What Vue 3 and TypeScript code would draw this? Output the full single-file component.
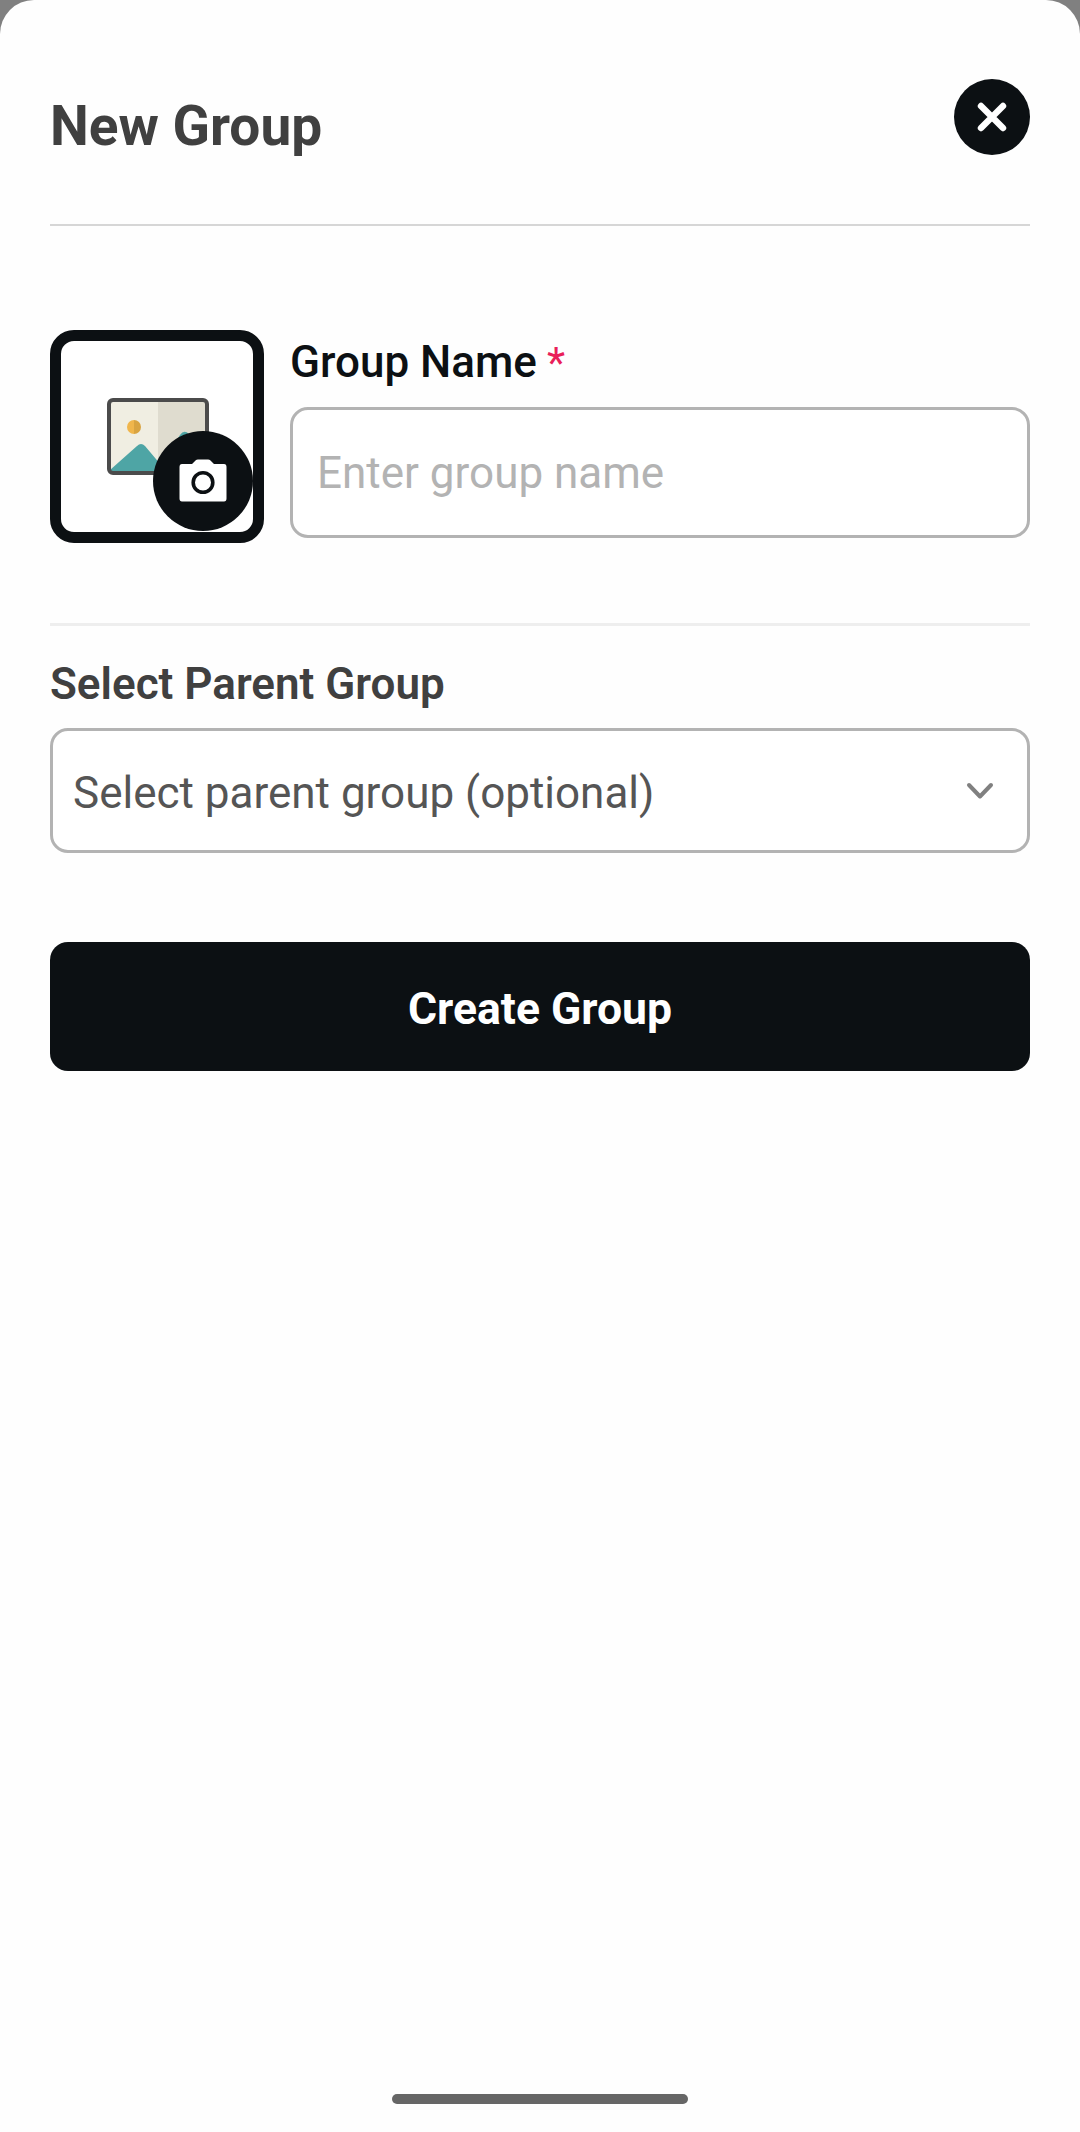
<script setup lang="ts">
const title: string = 'New Group'
</script>

<template>
  <div class="sheet">
    <header class="head">
      <h1 class="title">{{ title }}</h1>
      <button class="close" type="button" aria-label="Close">
        <svg width="32" height="32" viewBox="0 0 32 32">
          <path d="M5 5 L27 27 M27 5 L5 27" fill="none" stroke="#fff" stroke-width="6.4" stroke-linecap="round" />
        </svg>
      </button>
    </header>
    <div class="rule"></div>

    <section class="name-row">
      <div class="avatar">
        <svg class="pic" width="102" height="77" viewBox="0 0 102 77">
          <rect x="2" y="2" width="98" height="73" rx="4" fill="#f0eee2" />
          <path d="M51 2 H96 a4 4 0 0 1 4 4 V71 a4 4 0 0 1 -4 4 H51 Z" fill="#dfdccf" />
          <path d="M3 72 L30 48 Q34 44 38 48 L54 67 L73 37 Q77 31 82 36 L100 58 V71 a4 4 0 0 1 -4 4 H6 Z" fill="#4ea5a5" />
          <path d="M27 22 a7 7 0 0 0 0 14 Z" fill="#f0b64c" />
          <path d="M27 22 a7 7 0 0 1 0 14 Z" fill="#d9a441" />
          <rect x="2" y="2" width="98" height="73" rx="4" fill="none" stroke="#4b4b4b" stroke-width="4" />
        </svg>
        <span class="cam">
          <svg width="48" height="44" viewBox="0 0 48 44">
            <path d="M3 5 H13 L16.5 1.5 Q17.5 .5 19 .5 H29 Q30.5 .5 31.5 1.5 L35 5 H45 Q47.5 5 47.5 8 V39.5 Q47.5 42.5 45 42.5 H3 Q.5 42.5 .5 39.5 V8 Q.5 5 3 5 Z" fill="#fff" />
            <circle cx="24" cy="23.5" r="9.8" fill="#fff" stroke="#0c1013" stroke-width="3.6" />
          </svg>
        </span>
      </div>
      <div class="name-field">
        <label class="name-label">Group Name<span class="req">*</span></label>
        <input class="input" type="text" placeholder="Enter group name" />
      </div>
    </section>
    <div class="rule light"></div>

    <section class="parent">
      <div class="parent-label">Select Parent Group</div>
      <div class="select">
        <span class="select-text">Select parent group (optional)</span>
        <svg width="28" height="18" viewBox="0 0 28 18">
          <path d="M3 3 L14 14.5 L25 3" fill="none" stroke="#808080" stroke-width="4" stroke-linecap="round" stroke-linejoin="round" />
        </svg>
      </div>
    </section>

    <button class="create" type="button">Create Group</button>

    <div class="home"></div>
  </div>
</template>

<style scoped>
.sheet {
  box-sizing: border-box;
  height: 2132px;
  padding: 79px 50px 28px;
  display: flex;
  flex-direction: column;
  background: #fefefe;
  border-radius: 34px 34px 0 0;
  font-family: Roboto, sans-serif;
}
.head {
  display: flex;
  justify-content: space-between;
  align-items: flex-start;
  height: 145px;
}
.title {
  margin: 14px 0 0;
  font-size: 55px;
  line-height: 66px;
  font-weight: 700;
  color: #404040;
}
.close {
  width: 76px;
  height: 76px;
  padding: 0;
  border: 0;
  border-radius: 50%;
  background: #0c1013;
  display: flex;
  align-items: center;
  justify-content: center;
}
.rule {
  height: 2px;
  background: #d6d6d6;
}
.rule.light {
  height: 3px;
  background: #eeeeee;
}
.name-row {
  display: flex;
  gap: 26px;
  margin-top: 104px;
  height: 293px;
}
.avatar {
  position: relative;
  box-sizing: border-box;
  width: 214px;
  height: 213px;
  border: 11px solid #0c1013;
  border-radius: 24px;
  background: #fff;
}
.pic {
  position: absolute;
  left: 46px;
  top: 57px;
}
.cam {
  position: absolute;
  left: 92px;
  top: 90px;
  width: 100px;
  height: 100px;
  border-radius: 50%;
  background: #0c1013;
  display: flex;
  align-items: center;
  justify-content: center;
}
.name-field {
  flex: 1;
  min-width: 0;
}
.name-label {
  display: block;
  height: 62px;
  padding-top: 2px;
  box-sizing: border-box;
  font-size: 44px;
  line-height: 60px;
  font-weight: 500;
  color: #0c1013;
}
.req {
  margin-left: 10px;
  color: #e91e5a;
  font-size: 42px;
  font-weight: 400;
}
.input {
  display: block;
  box-sizing: border-box;
  width: 100%;
  height: 131px;
  margin-top: 15px;
  padding: 0 24px;
  border: 3px solid #b3b3b3;
  border-radius: 18px;
  background: #fff;
  font-family: inherit;
  font-size: 44px;
  color: #0c1013;
  outline: none;
}
.input::placeholder {
  color: #b3b3b3;
  opacity: 1;
}
.parent {
  margin-top: 27px;
}
.parent-label {
  font-size: 44px;
  line-height: 62px;
  font-weight: 600;
  color: #404040;
}
.select {
  box-sizing: border-box;
  height: 125px;
  margin-top: 13px;
  padding: 0 33px 0 20px;
  border: 3px solid #b3b3b3;
  border-radius: 18px;
  background: #fff;
  display: flex;
  align-items: center;
  justify-content: space-between;
  font-size: 44px;
  color: #555555;
}
.select-text {
  padding-top: 5px;
}
.create {
  height: 129px;
  margin-top: 89px;
  padding: 5px 0 0;
  border: 0;
  border-radius: 18px;
  background: #0c1013;
  color: #fff;
  font-family: inherit;
  font-size: 44.5px;
  font-weight: 700;
}
.home {
  width: 296px;
  height: 10px;
  margin: auto auto 0;
  border-radius: 5px;
  background: #666666;
}
</style>

<style>
html,
body {
  background: #808080;
}
</style>
